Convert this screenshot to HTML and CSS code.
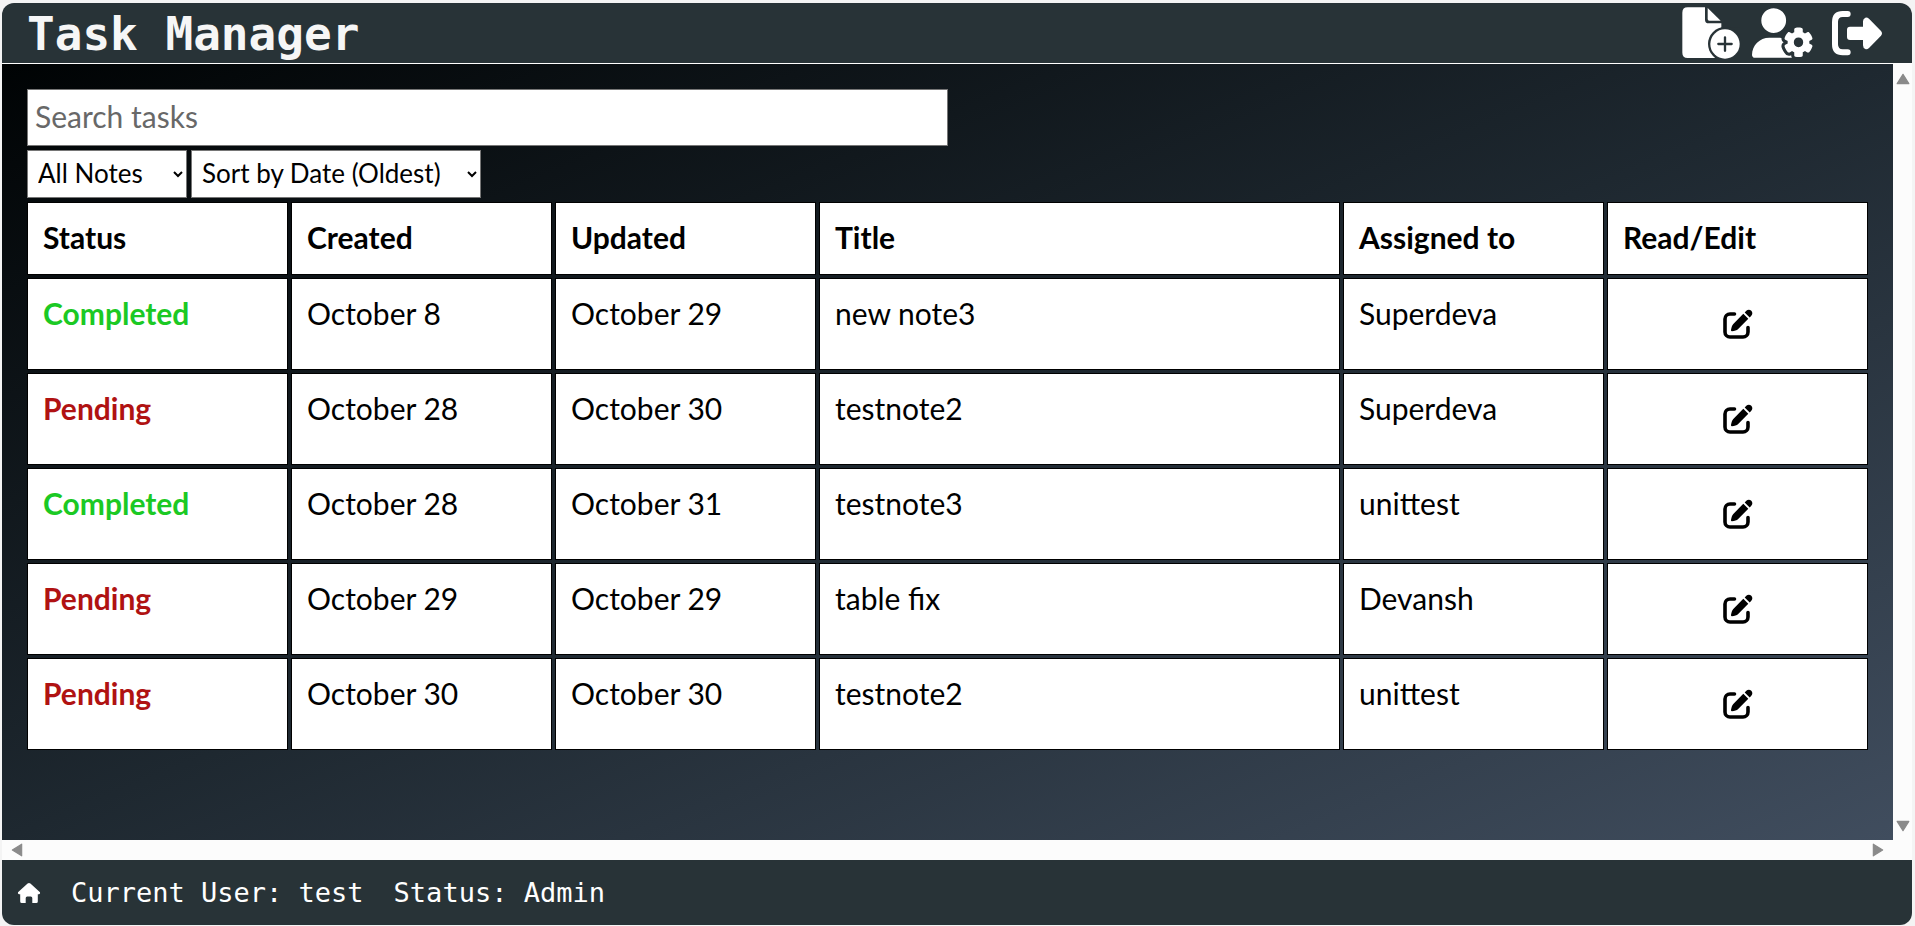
FILE: index.html
```html
<!DOCTYPE html>
<html lang="en">
<head>
<meta charset="utf-8">
<meta name="viewport" content="width=device-width, initial-scale=1">
<title>Task Manager</title>
<link rel="stylesheet" href="styles.css">
</head>
<body>
<svg class="sprite" aria-hidden="true">
  <symbol id="edit" viewBox="0 0 30 30">
    <path d="M11.500 5H7a5 5 0 0 0-5 5v13a5 5 0 0 0 5 5h13a5 5 0 0 0 5-5v-4.500" fill="none" stroke="currentColor" stroke-width="3.600" stroke-linecap="round"/>
    <path d="M20.300 4.800l5 5L15.200 19.900c-1.400 1.400-3.700 2-6.200 2.300-.7.100-1.100-.4-1-1.100.4-2.400.9-4.800 2.300-6.200zM21.700 3.400l1.600-1.600c1.400-1.400 3.600-1.400 5 0s1.400 3.600 0 5l-1.600 1.600z" fill="currentColor"/>
  </symbol>
</svg>
<div class="app">
  <header class="topbar">
    <h1 class="brand">Task Manager</h1>
    <nav class="tools">
      <button class="tool" type="button" aria-label="New note">
        <svg width="58" height="52" viewBox="21 14 174 156" fill="currentColor"><path d="M38 15H90V52Q90 63 101 63H139V167H38Q22 167 22 151V31Q22 15 38 15z"/><path d="M98 17V50Q98 55 103 55H137z"/><path class="cut" d="M139 76H195V170H120z"/><circle class="cut" cx="150" cy="125" r="51"/><circle cx="150" cy="125" r="44"/><path class="plus" d="M150 105V145M130 125H170"/></svg>
      </button>
      <button class="tool" type="button" aria-label="Manage users">
        <svg width="62" height="50" viewBox="0 0 640 512" fill="currentColor"><path d="M224 0a128 128 0 1 1 0 256A128 128 0 1 1 224 0zM178.300 304h91.400c11.800 0 23.400 1.200 34.500 3.300c-2.100 18.500 7.400 35.600 21.800 44.800c-16.600 10.600-26.700 31.600-20 53.300c4 12.900 9.400 25.500 16.400 37.600s15.200 23.100 24.400 33c15.700 16.900 39.600 18.400 57.200 8.700v.9c0 9.200 2.700 18.500 7.900 26.300H29.700C13.300 512 0 498.700 0 482.300C0 383.800 79.800 304 178.300 304zM436 218.200c0-7 4.500-13.300 11.300-14.800c10.500-2.400 21.500-3.700 32.700-3.700s22.200 1.300 32.700 3.700c6.800 1.500 11.300 7.800 11.300 14.800v30.600c7.900 3.400 15.400 7.700 22.300 12.800l24.900-14.300c6.100-3.500 13.700-2.700 18.500 2.400c7.600 8.100 14.300 17.200 20.100 27.200s10.300 20.400 13.500 31c2.100 6.700-1.100 13.700-7.200 17.200l-25 14.400c.4 4 .7 8.100 .7 12.300s-.2 8.200-.7 12.300l25 14.400c6.100 3.500 9.200 10.500 7.200 17.200c-3.300 10.600-7.800 21-13.500 31s-12.500 19.100-20.100 27.200c-4.800 5.100-12.500 5.900-18.500 2.400l-24.900-14.300c-6.900 5.100-14.300 9.400-22.300 12.800v30.600c0 7-4.500 13.300-11.300 14.800c-10.500 2.400-21.500 3.700-32.700 3.700s-22.200-1.300-32.700-3.700c-6.800-1.500-11.300-7.800-11.300-14.800V454.800c-8-3.400-15.600-7.700-22.500-12.900l-24.700 14.300c-6.100 3.500-13.700 2.700-18.500-2.400c-7.600-8.100-14.300-17.200-20.100-27.200s-10.300-20.400-13.500-31c-2.100-6.700 1.100-13.700 7.200-17.200l24.800-14.300c-.4-4.100-.7-8.200-.7-12.400s.2-8.300 .7-12.400L343.800 325c-6.100-3.500-9.200-10.500-7.200-17.200c3.300-10.600 7.700-21 13.500-31s12.500-19.100 20.100-27.200c4.800-5.100 12.400-5.900 18.500-2.400l24.800 14.300c6.900-5.100 14.500-9.400 22.500-12.900V218.200zm92.100 133.500a48.100 48.100 0 1 0 -96.100 0 48.100 48.100 0 1 0 96.100 0z"/></svg>
      </button>
      <button class="tool" type="button" aria-label="Log out">
        <svg width="58" height="50" viewBox="6 18 174 150" fill="currentColor"><path class="bracket" d="M71 36H56Q33 36 33 60V127Q33 151 56 151H71"/><path d="M78 74H117V58Q117 50 124 47Q129 45 135 50L171 87Q177 94 171 101L135 138Q129 143 124 141Q117 138 117 130V114H78Q69 114 69 105V83Q69 74 78 74z"/></svg>
      </button>
    </nav>
  </header>

  <div class="viewport">
    <main class="content">
      <input class="search" type="text" placeholder="Search tasks" aria-label="Search tasks">
      <div class="filters">
        <select class="filter filter-notes" aria-label="Filter notes"><option>All Notes</option></select>
        <select class="filter filter-sort" aria-label="Sort notes"><option>Sort by Date (Oldest)</option></select>
      </div>
      <table class="tasks">
        <colgroup><col class="narrow"><col class="narrow"><col class="narrow"><col><col class="narrow"><col class="narrow"></colgroup>
        <thead>
          <tr><th>Status</th><th>Created</th><th>Updated</th><th>Title</th><th>Assigned to</th><th>Read/Edit</th></tr>
        </thead>
        <tbody>
          <tr><td class="done">Completed</td><td>October 8</td><td>October 29</td><td>new note3</td><td>Superdeva</td><td class="action"><button class="edit" type="button" aria-label="Edit new note3"><svg width="30" height="30"><use href="#edit"/></svg></button></td></tr>
          <tr><td class="pending">Pending</td><td>October 28</td><td>October 30</td><td>testnote2</td><td>Superdeva</td><td class="action"><button class="edit" type="button" aria-label="Edit testnote2"><svg width="30" height="30"><use href="#edit"/></svg></button></td></tr>
          <tr><td class="done">Completed</td><td>October 28</td><td>October 31</td><td>testnote3</td><td>unittest</td><td class="action"><button class="edit" type="button" aria-label="Edit testnote3"><svg width="30" height="30"><use href="#edit"/></svg></button></td></tr>
          <tr><td class="pending">Pending</td><td>October 29</td><td>October 29</td><td>table fix</td><td>Devansh</td><td class="action"><button class="edit" type="button" aria-label="Edit table fix"><svg width="30" height="30"><use href="#edit"/></svg></button></td></tr>
          <tr><td class="pending">Pending</td><td>October 30</td><td>October 30</td><td>testnote2</td><td>unittest</td><td class="action"><button class="edit" type="button" aria-label="Edit testnote2"><svg width="30" height="30"><use href="#edit"/></svg></button></td></tr>
        </tbody>
      </table>
    </main>
    <div class="bar bar-y" aria-hidden="true">
      <svg width="14" height="12" viewBox="0 0 12 10"><path d="M6 1L11 9H1z"/></svg>
      <svg width="14" height="12" viewBox="0 0 12 10"><path d="M1 1H11L6 9z"/></svg>
    </div>
    <div class="bar bar-x" aria-hidden="true">
      <svg width="12" height="14" viewBox="0 0 10 12"><path d="M9 1V11L1 6z"/></svg>
      <svg width="12" height="14" viewBox="0 0 10 12"><path d="M1 1L9 6L1 11z"/></svg>
    </div>
  </div>

  <footer class="status">
    <a class="home" href="#" aria-label="Home"><svg width="24" height="22" viewBox="0 0 24 22" fill="currentColor"><path d="M10.600 1.500Q12 .3 13.400 1.500L23 10.300Q23.600 12 22 12.200H20.800V19.500Q20.800 21 19.300 21H15.300V16Q15.300 14.500 13.800 14.500H10.200Q8.700 14.500 8.700 16V21H4.700Q3.200 21 3.200 19.500V12.200H2Q.4 12 1 10.300z"/></svg></a>
    <p class="info">Current User: test</p>
    <p class="info">Status: Admin</p>
  </footer>
</div>
</body>
</html>
```

FILE: styles.css
```css
* { box-sizing: border-box; }

body {
  margin: 0;
  background: #f4f4f4;
  color: #000;
  font: 30px/39px Lato, "Open Sans", sans-serif;
}

.sprite { display: none; }

.app {
  display: flex;
  flex-direction: column;
  height: 100vh;
  padding: 3px 3px 1px 2px;
}

.topbar {
  display: flex;
  align-items: center;
  justify-content: space-between;
  padding: 0 28px 0 25px;
  border-bottom: 1px solid #fff;
  border-radius: 12px 12px 0 0;
  background: #283337;
  color: #fff;
}

.brand {
  margin: 0;
  padding-top: 3px;
  color: #f6f6f6;
  font: bold 46px/57px "DejaVu Sans Mono", monospace;
}

.tools {
  display: flex;
  align-items: center;
  gap: 12px;
}

.tool,
.edit {
  display: flex;
  padding: 0;
  border: 0;
  background: none;
  color: inherit;
}

.edit { color: #000; }
.cut { fill: #283337; }
.plus { fill: none; stroke: #283337; stroke-width: 7; stroke-linecap: round; }
.bracket { fill: none; stroke: currentColor; stroke-width: 18; stroke-linecap: round; }

.viewport {
  display: grid;
  flex: 1;
  grid-template-columns: 1fr 19px;
  grid-template-rows: 1fr 20px;
  min-height: 0;
  background: #fcfcfc;
}

.content {
  display: flex;
  flex-direction: column;
  gap: 4px;
  min-width: 0;
  padding: 25px;
  overflow: hidden;
  background: linear-gradient(to bottom right, #000304, #1e2830 50%, #404d5e);
}

.search {
  width: 50%;
  padding: 7px 7px 9px;
  border: 1px solid #767676;
  background: #fff;
  font: inherit;
}

.search::placeholder { color: #686868; }

.filters { display: flex; gap: 4px; }

.filter {
  height: 48px;
  padding: 0 6px 2px;
  border: 1px solid #767676;
  border-radius: 0;
  background: #fff;
  color: #000;
  font: 26px/33px Lato, "Open Sans", sans-serif;
}

.filter-notes { width: 160px; }
.filter-sort { width: 290px; }

.tasks {
  width: calc(100% + 6px);
  margin: -3px;
  border-spacing: 3px;
  table-layout: fixed;
  text-align: left;
}

.narrow { width: 261px; }

.tasks th,
.tasks td {
  padding: 15px 15px 17px;
  border: 1px solid #000;
  background: #fff;
  vertical-align: top;
}

.tasks td { height: 92px; }
.tasks .action { padding: 15px; vertical-align: middle; }
.edit { margin: 0 auto; }
.done { color: #1bc924; font-weight: bold; }
.pending { color: #b01212; font-weight: bold; }

.bar { display: flex; align-items: center; justify-content: space-between; }
.bar svg { fill: #8a8a8a; stroke: #8a8a8a; stroke-linejoin: round; }
.bar-y { flex-direction: column; padding: 9px 0 8px; }
.bar-x { padding: 0 9px; }

.status {
  display: flex;
  align-items: center;
  height: 65px;
  padding: 0 15px;
  border-radius: 0 0 12px 12px;
  background: #283337;
  color: #fff;
  font: 27px/41px "DejaVu Sans Mono", monospace;
}

.home { display: flex; color: inherit; }
.info { margin: 0 0 0 30px; }
```
